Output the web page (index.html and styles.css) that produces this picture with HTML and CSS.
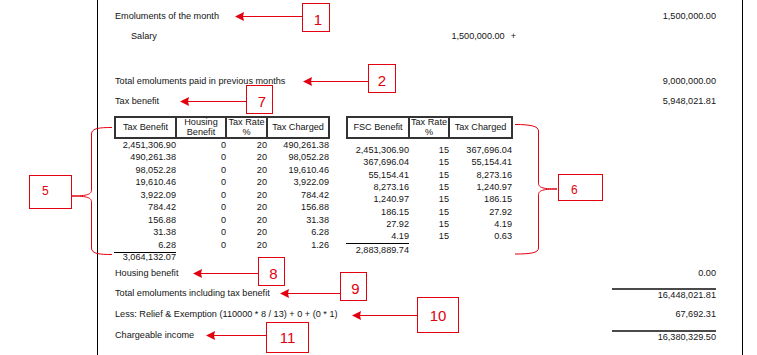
FILE: index.html
```html
<!DOCTYPE html>
<html>
<head>
<meta charset="utf-8">
<title>Tax computation</title>
<link rel="stylesheet" href="styles.css">
</head>
<body>
<div class="page">
  <div class="row"><span>Emoluments of the month</span><span class="amt">1,500,000.00</span></div>
  <div class="row"><span class="indent">Salary</span><span class="sub">1,500,000.00<span class="plus">+</span></span></div>
  <div class="row gap"><span>Total emoluments paid in previous months</span><span class="amt">9,000,000.00</span></div>
  <div class="row"><span>Tax benefit</span><span class="amt">5,948,021.81</span></div>

  <div class="tables">
    <div class="tbl tbl-left">
      <div class="thead">
        <div class="th">Tax Benefit</div>
        <div class="th">Housing Benefit</div>
        <div class="th">Tax Rate %</div>
        <div class="th">Tax Charged</div>
      </div>
      <div class="tbody">
        <span>2,451,306.90</span><span>0</span><span>20</span><span>490,261.38</span>
        <span>490,261.38</span><span>0</span><span>20</span><span>98,052.28</span>
        <span>98,052.28</span><span>0</span><span>20</span><span>19,610.46</span>
        <span>19,610.46</span><span>0</span><span>20</span><span>3,922.09</span>
        <span>3,922.09</span><span>0</span><span>20</span><span>784.42</span>
        <span>784.42</span><span>0</span><span>20</span><span>156.88</span>
        <span>156.88</span><span>0</span><span>20</span><span>31.38</span>
        <span>31.38</span><span>0</span><span>20</span><span>6.28</span>
        <span>6.28</span><span>0</span><span>20</span><span>1.26</span>
      </div>
      <div class="ttotal">3,064,132.07</div>
    </div>

    <div class="tbl tbl-right">
      <div class="thead">
        <div class="th">FSC Benefit</div>
        <div class="th">Tax Rate %</div>
        <div class="th">Tax Charged</div>
      </div>
      <div class="tbody">
        <span>2,451,306.90</span><span>15</span><span>367,696.04</span>
        <span>367,696.04</span><span>15</span><span>55,154.41</span>
        <span>55,154.41</span><span>15</span><span>8,273.16</span>
        <span>8,273.16</span><span>15</span><span>1,240.97</span>
        <span>1,240.97</span><span>15</span><span>186.15</span>
        <span>186.15</span><span>15</span><span>27.92</span>
        <span>27.92</span><span>15</span><span>4.19</span>
        <span>4.19</span><span>15</span><span>0.63</span>
      </div>
      <div class="ttotal">2,883,889.74</div>
    </div>
  </div>

  <div class="row after"><span>Housing benefit</span><span class="amt">0.00</span></div>
  <div class="row tall"><span>Total emoluments including tax benefit</span><span class="amt ruled">16,448,021.81</span></div>
  <div class="row tall"><span>Less: Relief &amp; Exemption (110000 * 8 / 13) + 0 + (0 * 1)</span><span class="amt">67,692.31</span></div>
  <div class="row tall"><span>Chargeable income</span><span class="amt ruled">16,380,329.50</span></div>
</div>

<div class="annot">
  <svg class="marks" width="757" height="355" viewBox="0 0 757 355">
    <g stroke="#e3000f" stroke-width="1" fill="none">
      <line x1="243" y1="16.5" x2="302" y2="16.5"/>
      <line x1="311" y1="81.5" x2="368" y2="81.5"/>
      <line x1="188" y1="101.5" x2="246" y2="101.5"/>
      <line x1="201" y1="273.5" x2="258" y2="273.5"/>
      <line x1="288" y1="293.5" x2="340" y2="293.5"/>
      <line x1="360" y1="315.5" x2="417" y2="315.5"/>
      <line x1="214" y1="335.5" x2="266" y2="335.5"/>
      <path d="M112,127.5 C100,127.5 91.5,128 91.5,134 L91.5,190 C91.5,194 88,196 72,196 C88,196 91.5,198 91.5,202 L91.5,248 C91.5,254 100,254.5 112,254.5"/>
      <path d="M515,124.5 C530,124.5 538.5,126 538.5,131 L538.5,183 C538.5,187 541,189 557,189 C541,189 538.5,191 538.5,195 L538.5,248 C538.5,253 530,254 515,254"/>
    </g>
    <g fill="#e3000f">
      <polygon points="235,16.5 244,12 243,16.5 244,21"/>
      <polygon points="303,81.5 312,77 311,81.5 312,86"/>
      <polygon points="180,101.5 189,97 188,101.5 189,106"/>
      <polygon points="193,273.5 202,269 201,273.5 202,278"/>
      <polygon points="280,293.5 289,289 288,293.5 289,298"/>
      <polygon points="352,315.5 361,311 360,315.5 361,320"/>
      <polygon points="206,335.5 215,331 214,335.5 215,340"/>
    </g>
  </svg>
  <div class="box b1">1</div>
  <div class="box b2">2</div>
  <div class="box b7">7</div>
  <div class="box b8">8</div>
  <div class="box b9">9</div>
  <div class="box b10">10</div>
  <div class="box b11">11</div>
  <div class="box small b5">5</div>
  <div class="box small b6">6</div>
</div>
</body>
</html>
```
FILE: styles.css
```css
html, body {
  margin: 0;
  height: 355px;
  overflow: hidden;
  background: #fff;
}
body {
  position: relative;
  font-family: "Liberation Sans", Arial, sans-serif;
  font-size: 9.15px;
  color: #141414;
}
.page {
  box-sizing: border-box;
  margin-left: 97px;
  width: 646px;
  height: 355px;
  border-left: 1px solid #000;
  border-right: 1px solid #000;
  padding: 6px 26px 0 17px;
}
.row {
  display: flex;
  align-items: center;
  justify-content: space-between;
  height: 20px;
  line-height: 11px;
  white-space: nowrap;
}
.row.gap { margin-top: 25px; }
.row.after { margin-top: 1px; }
.row.tall { height: 21px; }
.indent { padding-left: 16px; }
.sub {
  margin-left: auto;
  margin-right: 200px;
}
.plus { margin-left: 6px; }
.amt { text-align: right; }
.ruled {
  display: inline-block;
  width: 104px;
  border-top: 2px solid #4a4a4a;
  line-height: 10px;
}

/* tables */
.tables {
  display: flex;
  align-items: flex-start;
  gap: 16px;
  margin-top: 5px;
  margin-left: -1px;
}
.thead {
  display: grid;
  height: 23px;
  box-sizing: border-box;
  border: 2px solid #333;
  border-right: 0;
}
.th {
  display: flex;
  align-items: center;
  justify-content: center;
  text-align: center;
  line-height: 9.5px;
  border-right: 2px solid #333;
}
.tbody {
  display: grid;
  text-align: right;
  white-space: nowrap;
}
.ttotal {
  border-top: 1px solid #000;
  text-align: right;
  line-height: 9px;
}

.tbl-left .thead { grid-template-columns: 61px 50px 41px 62px; }
.tbl-left .tbody {
  grid-template-columns: 62px 50px 41px 62px;
  line-height: 12.45px;
}
.tbl-left .ttotal {
  width: 62px;
  margin-top: 1px;
}

.tbl-right .thead { grid-template-columns: 62px 40px 63px; }
.tbl-right .tbody {
  grid-template-columns: 63px 40px 63px;
  line-height: 12.33px;
  padding-top: 5px;
}
.tbl-right .ttotal {
  width: 63px;
  line-height: 12px;
}

/* annotations */
.annot {
  position: absolute;
  left: 0;
  top: 0;
  width: 757px;
  height: 355px;
  pointer-events: none;
}
.marks {
  position: absolute;
  left: 0;
  top: 0;
}
.box {
  position: absolute;
  box-sizing: border-box;
  display: flex;
  align-items: center;
  justify-content: center;
  border: 1px solid #e3000f;
  color: #e3000f;
  font-size: 15px;
  line-height: 15px;
  padding: 3px 0 0 4px;
}
.box.small {
  font-size: 12px;
  line-height: 12px;
  align-items: flex-start;
  justify-content: flex-start;
  padding: 9px 0 0 12px;
}
.b1 { left: 302px; top: 3px; width: 28px; height: 29px; }
.b2 { left: 368px; top: 64px; width: 28px; height: 29px; padding-left: 0; }
.b7 { left: 246px; top: 85px; width: 27px; height: 29px; padding-left: 5px; }
.b8 { left: 258px; top: 257px; width: 27px; height: 29px; }
.b9 { left: 340px; top: 272px; width: 27px; height: 29px; }
.b10 { left: 417px; top: 297px; width: 42px; height: 36px; padding: 0; }
.b11 { left: 266px; top: 322px; width: 43px; height: 31px; padding: 0; }
.b5 { left: 29px; top: 175px; width: 43px; height: 34px; }
.b6 { left: 558px; top: 174px; width: 45px; height: 27px; }
```
